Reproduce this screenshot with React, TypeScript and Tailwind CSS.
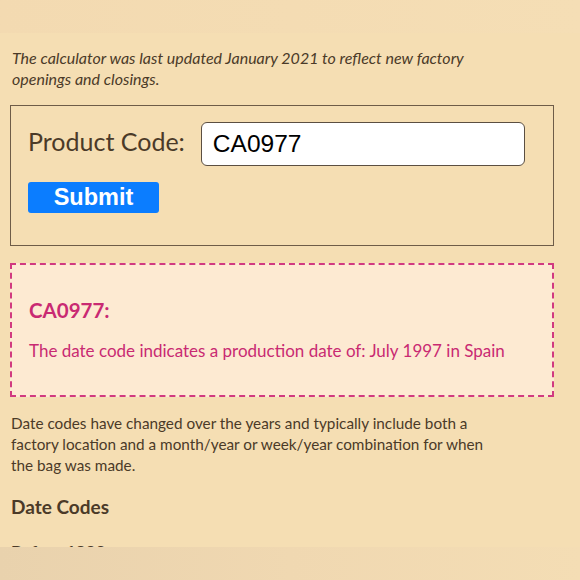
export default function App() {
  return (
    <div className="relative h-[580px] w-[580px] overflow-hidden bg-[#f5deb3] font-['Lato',sans-serif] text-[#4b3a28]">
      <div className="h-[33px] bg-gradient-to-r from-[#f3dab1] via-[#f4dcb3] to-[#f5deb5]" />

      <div className="pl-[10px] pr-[26px]">
        <p className="mt-[14px] max-w-[500px] pl-[2px] text-[16px] leading-[21px] italic">
          The calculator was last updated January 2021 to reflect new factory openings and closings.
        </p>

        <form
          className="mt-[16px] border border-[#6e5c48] pt-[16px] pr-[28px] pb-[32px] pl-[17px]"
          onSubmit={(e) => e.preventDefault()}
        >
          <div className="flex items-center gap-[16px]">
            <label className="pb-[6px] text-[25px] leading-[30px] text-[#4b3a28]">Product Code:</label>
            <input
              className="h-[44px] min-w-0 flex-1 rounded-[6px] border border-[#5b4f42] bg-white px-[11px] font-['Liberation_Sans',Arial,sans-serif] text-[24.5px] text-black outline-none"
              defaultValue="CA0977"
            />
          </div>
          <button
            type="submit"
            className="mt-[16px] h-[31px] w-[131px] rounded-[3px] bg-[#0b7dff] font-['Liberation_Sans',Arial,sans-serif] text-[23.5px] leading-[31px] font-bold text-white"
          >
            Submit
          </button>
        </form>

        <div className="mt-[17px] h-[134px] border-2 border-dashed border-[#d13a80] bg-[#fdead2] pt-[31px] pl-[17px] text-[#c92a72]">
          <h3 className="text-[20.5px] leading-[28px] font-bold">CA0977:</h3>
          <p className="mt-[16px] text-[17px] leading-[22px]">
            The date code indicates a production date of: July 1997 in Spain
          </p>
        </div>

        <p className="mt-[16px] max-w-[490px] pl-[1px] text-[15.3px] leading-[21px]">
          Date codes have changed over the years and typically include both a factory location and a month/year or
          week/year combination for when the bag was made.
        </p>

        <h2 className="mt-[18px] pl-[1px] text-[19px] leading-[26px] font-bold">Date Codes</h2>
        <h3 className="mt-[21px] pl-[1px] text-[17px] leading-[22px] font-bold">Before 1983</h3>
      </div>

      <div className="absolute inset-x-0 bottom-0 h-[33px] bg-gradient-to-r from-[#e9d2ad] via-[#f0d8b1] to-[#f4ddb4]" />
    </div>
  );
}
